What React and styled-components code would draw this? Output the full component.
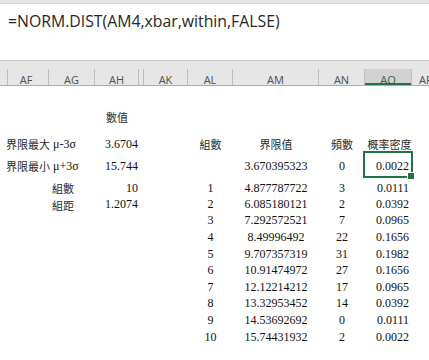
import React from 'react'
import styled, { createGlobalStyle } from 'styled-components'

const GlobalStyle = createGlobalStyle`
html, body {
    margin: 0;
    padding: 0;
    background: #fff;
}
`

const COLS = '4px 45px 46px 44px 5px 44px 45px 86px 46px 47px 46px'

const Page = styled.div`
width: 429px;
height: 360px;
overflow: hidden;
background: #fff;
`

const TopStrip = styled.div`
height: 3px;
background: #e6e6e6;
border-bottom: 1px solid #d4d4d4;
`

const FormulaBar = styled.div`
height: 57px;
padding: 6px 0 0 8px;
box-sizing: border-box;
background: #fff;
border-bottom: 1px solid #c6c6c6;
font-family: 'Open Sans', 'Noto Sans', sans-serif;
font-size: 15.8px;
color: #262626;
white-space: nowrap;
`

const GapStrip = styled.div`
height: 8px;
background: #e6e6e6;
`

const HeaderRow = styled.div`
display: grid;
grid-template-columns: ${COLS};
height: 16px;
background: #e6e6e6;
border-bottom: 1px solid #ababab;
`

const HeadCell = styled.div`
display: flex;
align-items: center;
justify-content: ${p => p.$left ? 'flex-start' : 'center'};
padding-left: ${p => p.$left ? '7px' : '0'};
padding-top: 4px;
box-sizing: border-box;
border-right: ${p => p.$noBorder ? 'none' : '1px solid #bdbdbd'};
font-family: 'Open Sans', 'Noto Sans', sans-serif;
font-size: 11px;
color: ${p => p.$selected ? '#3a5a46' : '#505050'};
background: ${p => p.$selected ? '#d2d2d2' : 'transparent'};
box-shadow: ${p => p.$selected ? 'inset 0 -2px 0 #217346' : 'none'};
overflow: hidden;
white-space: nowrap;
`

const Sheet = styled.div`
font-family: 'Liberation Serif', 'Times New Roman', serif;
font-size: 12px;
color: #111;
`

const Row = styled.div`
display: grid;
grid-template-columns: ${COLS};
height: ${p => p.$h}px;

& > * {
    padding-top: ${p => p.$shift || 0}px;
}
`

const Cell = styled.div`
grid-column: ${p => p.$col} / span ${p => p.$span || 1};
display: flex;
align-items: center;
justify-content: ${p => p.$align === 'right' ? 'flex-end' : p.$align === 'left' ? 'flex-start' : 'center'};
padding-right: ${p => p.$pr || 0}px;
padding-left: ${p => p.$pl || 0}px;
box-sizing: border-box;
white-space: nowrap;
position: relative;
`

const Selected = styled(Cell)`
&::after {
    content: '';
    position: absolute;
    left: -2px;
    top: -1px;
    right: -1px;
    bottom: -1px;
    border: 2px solid #217346;
}

&::before {
    content: '';
    position: absolute;
    right: -3px;
    bottom: -3px;
    width: 6px;
    height: 6px;
    background: #217346;
    border: 1px solid #fff;
    z-index: 1;
}
`

const Cjk = styled.span`
font-family: 'Noto Sans CJK TC', 'Noto Sans CJK SC', sans-serif;
font-size: 11px;
color: #2a2a2a;
`

const Sym = styled.span`
margin-left: 3px;
`

const headers = [
    { label: '', left: true },
    { label: 'AF' },
    { label: 'AG' },
    { label: 'AH' },
    { label: '' },
    { label: 'AK' },
    { label: 'AL' },
    { label: 'AM' },
    { label: 'AN' },
    { label: 'AO', selected: true },
    { label: 'AP', left: true, noBorder: true },
]

const table = [
    ['1', '4.877787722', '3', '0.0111'],
    ['2', '6.085180121', '2', '0.0392'],
    ['3', '7.292572521', '7', '0.0965'],
    ['4', '8.49996492', '22', '0.1656'],
    ['5', '9.707357319', '31', '0.1982'],
    ['6', '10.91474972', '27', '0.1656'],
    ['7', '12.12214212', '17', '0.0965'],
    ['8', '13.32953452', '14', '0.0392'],
    ['9', '14.53692692', '0', '0.0111'],
    ['10', '15.74431932', '2', '0.0022'],
]

const leftBlock = {
    0: ['組數', '10'],
    1: ['組距', '1.2074'],
}

const App = () => {
    return (
        <Page>
            <GlobalStyle />
            <TopStrip />
            <FormulaBar>=NORM.DIST(AM4,xbar,within,FALSE)</FormulaBar>
            <GapStrip />
            <HeaderRow>
                {headers.map((h, i) => (
                    <HeadCell key={i} $left={h.left} $selected={h.selected} $noBorder={h.noBorder}>
                        {h.label}
                    </HeadCell>
                ))}
            </HeaderRow>

            <Sheet>
                <Row $h={16} />
                <Row $h={25} $shift={5}>
                    <Cell $col={4}><Cjk>數值</Cjk></Cell>
                </Row>
                <Row $h={25} $shift={9}>
                    <Cell $col={2} $span={2} $align="left" $pl={2}>
                        <Cjk>界限最大</Cjk><Sym>μ-3σ</Sym>
                    </Cell>
                    <Cell $col={4} $align="right" $pr={1}>3.6704</Cell>
                    <Cell $col={7}><Cjk>組數</Cjk></Cell>
                    <Cell $col={8}><Cjk>界限值</Cjk></Cell>
                    <Cell $col={9}><Cjk>頻數</Cjk></Cell>
                    <Cell $col={10} $pl={2}><Cjk>概率密度</Cjk></Cell>
                </Row>
                <Row $h={25} $shift={3}>
                    <Cell $col={2} $span={2} $align="left" $pl={2}>
                        <Cjk>界限最小</Cjk><Sym>μ+3σ</Sym>
                    </Cell>
                    <Cell $col={4} $align="right" $pr={1}>15.744</Cell>
                    <Cell $col={8}>3.670395323</Cell>
                    <Cell $col={9}>0</Cell>
                    <Selected $col={10} $align="right" $pr={3}>0.0022</Selected>
                </Row>
                {table.map((r, i) => (
                    <Row key={i} $h={16.65} $shift={3}>
                        {leftBlock[i] && (
                            <>
                                <Cell $col={2} $span={2} $align="right" $pr={21}><Cjk>{leftBlock[i][0]}</Cjk></Cell>
                                <Cell $col={4} $align="right" $pr={1}>{leftBlock[i][1]}</Cell>
                            </>
                        )}
                        <Cell $col={7}>{r[0]}</Cell>
                        <Cell $col={8}>{r[1]}</Cell>
                        <Cell $col={9}>{r[2]}</Cell>
                        <Cell $col={10} $align="right" $pr={3}>{r[3]}</Cell>
                    </Row>
                ))}
            </Sheet>
        </Page>
    )
}

export default App
